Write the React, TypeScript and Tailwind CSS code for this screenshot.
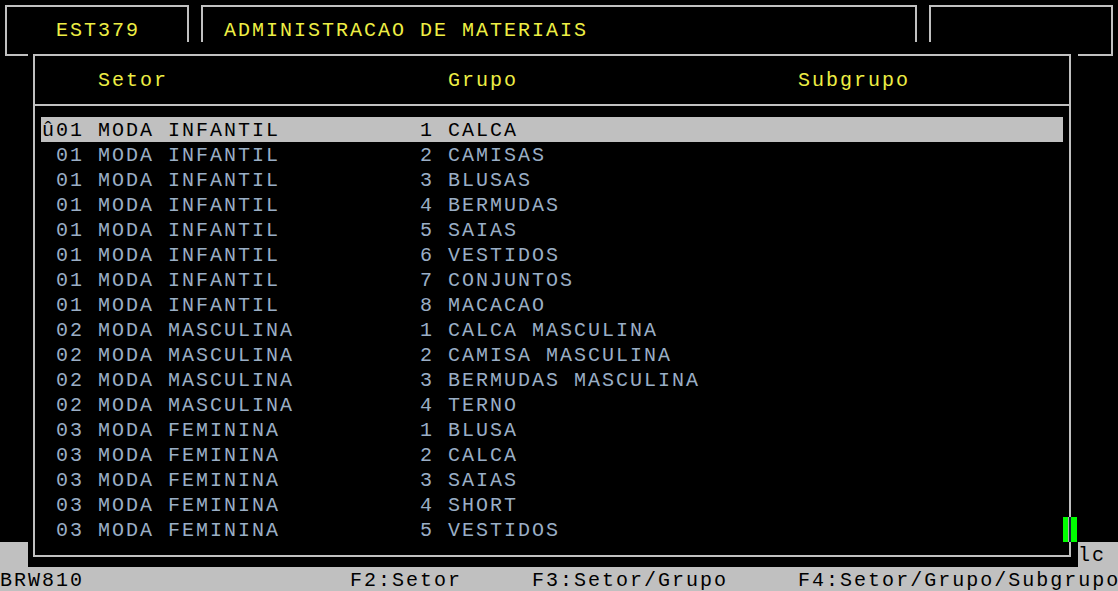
const rows: [string, string, string, string][] = [
  ['01', 'MODA INFANTIL', '1', 'CALCA'],
  ['01', 'MODA INFANTIL', '2', 'CAMISAS'],
  ['01', 'MODA INFANTIL', '3', 'BLUSAS'],
  ['01', 'MODA INFANTIL', '4', 'BERMUDAS'],
  ['01', 'MODA INFANTIL', '5', 'SAIAS'],
  ['01', 'MODA INFANTIL', '6', 'VESTIDOS'],
  ['01', 'MODA INFANTIL', '7', 'CONJUNTOS'],
  ['01', 'MODA INFANTIL', '8', 'MACACAO'],
  ['02', 'MODA MASCULINA', '1', 'CALCA MASCULINA'],
  ['02', 'MODA MASCULINA', '2', 'CAMISA MASCULINA'],
  ['02', 'MODA MASCULINA', '3', 'BERMUDAS MASCULINA'],
  ['02', 'MODA MASCULINA', '4', 'TERNO'],
  ['03', 'MODA FEMININA', '1', 'BLUSA'],
  ['03', 'MODA FEMININA', '2', 'CALCA'],
  ['03', 'MODA FEMININA', '3', 'SAIAS'],
  ['03', 'MODA FEMININA', '4', 'SHORT'],
  ['03', 'MODA FEMININA', '5', 'VESTIDOS'],
];

const header = '    Setor'.padEnd(29) + 'Grupo'.padEnd(25) + 'Subgrupo';
// last char kept apart so its trailing letter-spacing doesn't push past the edge
const status = 'BRW810'.padEnd(25) + 'F2:Setor'.padEnd(13) + 'F3:Setor/Grupo'.padEnd(19) + 'F4:Setor/Grupo/Subgrup';

function line(r: [string, string, string, string], first: boolean) {
  const [code, setor, num, grupo] = r;
  return (first ? 'û' : ' ') + code + ' ' + setor.padEnd(23) + num + ' ' + grupo;
}

export default function App() {
  return (
    <div className="w-[1118px] h-[591px] bg-black overflow-hidden flex flex-col font-['Liberation_Mono',monospace] text-[20px] tracking-[2px] whitespace-pre">
      {/* top boxes */}
      <div className="flex h-[42px] shrink-0 items-start">
        <div className="ml-[5px] mt-[5px] w-[184px] h-[37px] border-t-2 border-x-2 border-[#c0c0c0] pt-[10px] pl-[49px] text-[#eeee44]">
          <div className="h-[25px] leading-[27px]">EST379</div>
        </div>
        <div className="ml-[12px] mt-[5px] w-[716px] h-[37px] border-t-2 border-x-2 border-[#c0c0c0] pt-[10px] pl-[21px] text-[#eeee44]">
          <div className="h-[25px] leading-[27px]">ADMINISTRACAO DE MATERIAIS</div>
        </div>
        <div className="ml-[12px] mt-[5px] w-[184px] h-[37px] border-t-2 border-x-2 border-[#c0c0c0]" />
      </div>

      <div className="flex h-[525px] shrink-0">
        <div className="w-[28px] flex flex-col">
          <div className="ml-[5px] w-[23px] h-[14px] border-l-2 border-b-2 border-[#c0c0c0]" />
          <div className="flex-1" />
          <div className="h-[25px] bg-[#c0c0c0]" />
        </div>

        <div className="relative w-[1050px] bg-black pl-[5px] pt-[12px] pr-[7px] pb-[10px]">
          <div className="h-full border-2 border-[#c0c0c0] pt-[11px]">
            <div className="h-[25px] leading-[27px] pl-[7px] text-[#eeee44]">{header}</div>
            <div className="h-[12px]" />
            <div className="border-t-2 border-[#c0c0c0]" />
            <div className="h-[11px]" />
            {rows.map((r, i) => (
              <div
                key={i}
                className={
                  i === 0
                    ? 'h-[25px] leading-[27px] ml-[6px] mr-[6px] pl-[1px] bg-[#c0c0c0] text-black'
                    : 'h-[25px] leading-[27px] ml-[6px] mr-[6px] pl-[1px] text-[#9aaec6]'
                }
              >
                {line(r, i === 0)}
              </div>
            ))}
          </div>
          {/* cursor */}
          <div className="absolute left-[1035px] top-[475px] w-[14px] h-[25px] bg-[#00ff00] flex">
            <div className="ml-[5px] w-[1px] h-full bg-[#b0b0b0]" />
            <div className="w-[2px] h-full bg-[#10203a]" />
          </div>
        </div>

        <div className="w-[40px] flex flex-col">
          <div className="w-[35px] h-[14px] border-r-2 border-b-2 border-[#c0c0c0]" />
          <div className="flex-1" />
          <div className="h-[25px] leading-[27px] bg-[#c0c0c0] text-black">lc</div>
        </div>
      </div>

      <div className="h-[24px] shrink-0 bg-[#c0c0c0] text-black leading-[27px]">
        {status}
        <span className="tracking-normal">o</span>
      </div>
    </div>
  );
}
